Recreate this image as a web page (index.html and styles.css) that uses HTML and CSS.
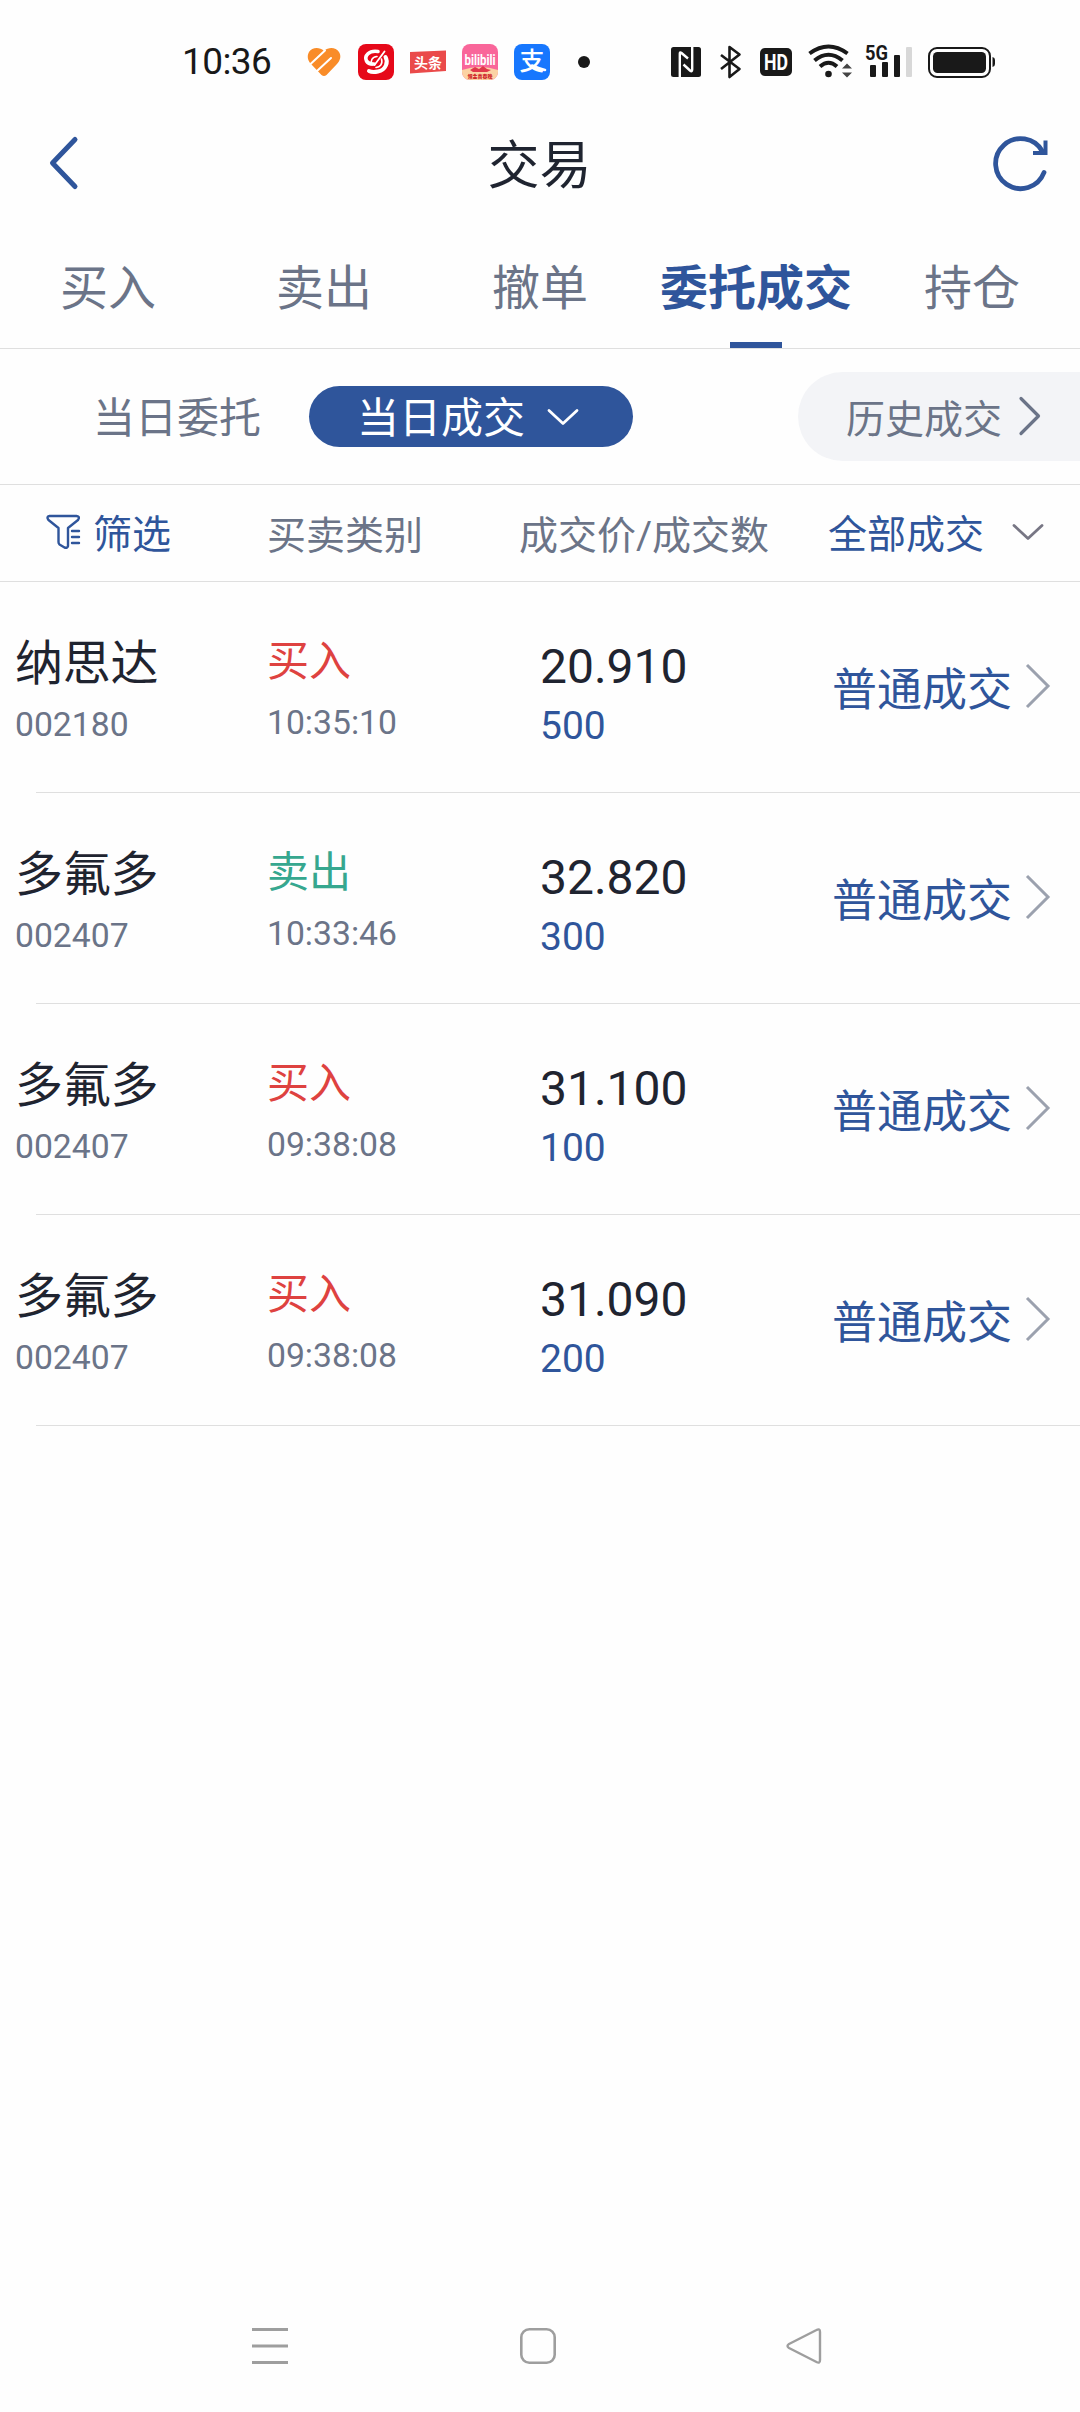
FILE: index.html
```html
<!DOCTYPE html>
<html lang="zh-CN">
<head>
  <meta charset="UTF-8">
  <meta name="viewport" content="width=device-width, initial-scale=1.0">
  <title>交易</title>
  <link rel="stylesheet" href="styles.css">
</head>
<body>
  <div class="status-bar">
    <span class="clock">10:36</span>
    <div class="app-icons">
      <svg width="36" height="36" viewBox="0 0 36 36">
        <path d="M18 7 C13 2.500 6 3.500 3 8 C0.500 12.500 2 17 5.500 20.500 L15.500 31 Q18 33 20.500 31 L30.500 20.500 C34.500 16.500 35.500 12 33 8 C30 3.500 23 2.500 18 7 Z" fill="#f98c28"/>
        <path d="M4 20.500 L19 6.500 M11 27 L25 14" fill="none" stroke="#fff" stroke-width="2" stroke-linecap="round"/>
      </svg>
      <svg width="36" height="36" viewBox="0 0 36 36">
        <rect width="36" height="36" rx="8" fill="#e60819"/>
        <g fill="none" stroke="#fff" stroke-linecap="round">
          <path d="M20 7.500 C11 6 6 12 8.500 17 C10.500 20.500 14 20 16 20" stroke-width="3.600"/>
          <path d="M27.500 13 C30.500 18 28 26 20 27.500 C15 28.500 13 28 11 27" stroke-width="4"/>
          <path d="M26.500 7.500 L16.500 21" stroke-width="1.800"/>
          <path d="M19 12.500 C14 13 12 17 14 21 M23.500 15 C25 20 22 23 18 23.500" stroke-width="1.600"/>
        </g>
      </svg>
      <svg width="36" height="36" viewBox="0 0 36 36">
        <path d="M0 8 L36 6.500 V27 L0 29.500 Z" fill="#ea4a4a"/>
        <text class="toutiao" x="18" y="23.500" text-anchor="middle">头条</text>
      </svg>
      <svg width="36" height="36" viewBox="0 0 36 36">
        <defs>
          <clipPath id="biliClip"><rect width="36" height="36" rx="8"/></clipPath>
        </defs>
        <g clip-path="url(#biliClip)">
          <rect width="36" height="36" fill="#f9669a"/>
          <path d="M0 26 Q18 20 36 26 V36 H0 Z" fill="#fbd3a4"/>
          <path d="M8 26 l5 -3 4 2 4 -3 4 3 4 1 -4 2 H11 Z" fill="#e0384a"/>
        </g>
        <text class="bili" x="18" y="20.500" text-anchor="middle" textLength="31" lengthAdjust="spacingAndGlyphs">bilibili</text>
        <text class="bili-sub" x="18" y="33.500" text-anchor="middle">领金喜春晚</text>
      </svg>
      <svg width="36" height="36" viewBox="0 0 36 36">
        <rect width="36" height="36" rx="8" fill="#1777fe"/>
        <text class="alipay" x="18" y="26" text-anchor="middle">支</text>
        <path d="M18 21.500 Q25 24.500 31 26" fill="none" stroke="#fff" stroke-width="2.600" stroke-linecap="round"/>
      </svg>
      <svg width="36" height="36" viewBox="0 0 36 36">
        <circle cx="18" cy="18" r="6" fill="#191919"/>
      </svg>
    </div>
    <div class="system-icons">
      <svg class="nfc" width="30" height="36" viewBox="0 0 30 36">
        <rect y="3" width="30" height="30" rx="2.500" fill="#191919"/>
        <path d="M8.800 33 V9.500 Q8.800 7.500 10.500 9 L17 14.500 M21.200 3 V25.500 Q21.200 28.500 19 26.500 L12.500 20.500" fill="none" stroke="#fff" stroke-width="2.400"/>
      </svg>
      <svg class="bt" width="21" height="36" viewBox="0 0 21 36" fill="none" stroke="#191919" stroke-width="2.600" stroke-linejoin="round">
        <path d="M1 11 L19.500 25 L9.500 33 V3 L19.500 10.500 L1 25"/>
      </svg>
      <svg class="hd" width="32" height="36" viewBox="0 0 32 36">
        <rect y="4" width="32" height="28" rx="5" fill="#191919"/>
        <text class="hd-text" x="16" y="25.500" text-anchor="middle" textLength="24" lengthAdjust="spacingAndGlyphs">HD</text>
      </svg>
      <svg class="wifi" width="45" height="36" viewBox="0 0 45 36">
        <g fill="none" stroke="#191919" stroke-width="4">
          <path d="M1.500 9.500 Q20.500 -4.500 39.500 9.500"/>
          <path d="M6.500 16.500 Q20.500 5 34.500 16.500"/>
          <path d="M12 22.500 Q20.500 15 29 22.500"/>
        </g>
        <circle cx="20.500" cy="30" r="3.300" fill="#191919"/>
        <path d="M34 24.500 L39 19.500 L44 24.500 Z M34 28.500 L39 33.500 L44 28.500 Z" fill="#444"/>
      </svg>
      <svg class="signal" width="46" height="36" viewBox="0 0 46 36">
        <g fill="#191919">
          <rect x="4" y="21" width="6" height="12" rx="1"/>
          <rect x="16" y="18" width="6" height="15" rx="1"/>
          <rect x="28" y="11" width="6" height="22" rx="1"/>
        </g>
        <rect x="40" y="3" width="6" height="30" rx="1" fill="#d8d8d8"/>
        <text class="net" x="-1" y="15.500" textLength="23" lengthAdjust="spacingAndGlyphs">5G</text>
      </svg>
      <svg class="battery" width="68" height="36" viewBox="0 0 68 36">
        <rect x="1" y="4" width="61" height="29" rx="8" fill="none" stroke="#191919" stroke-width="2"/>
        <rect x="5" y="8" width="53" height="21" rx="4.500" fill="#191919"/>
        <path d="M64.500 13 q2.500 .5 2.500 3 v4 q0 2.500 -2.500 3 Z" fill="#191919"/>
      </svg>
    </div>
  </div>

  <div class="header">
    <svg class="back" width="30" height="54" viewBox="0 0 30 54">
      <path d="M26 3.500 L3.500 27 L26 50.500" fill="none" stroke="#2f559b" stroke-width="5" stroke-linecap="round" stroke-linejoin="round"/>
    </svg>
    <h1>交易</h1>
    <svg class="refresh" width="58" height="58" viewBox="0 0 58 58" fill="none" stroke="#2f559b" stroke-width="4.800">
      <path d="M52 38.500 A25 25 0 1 1 50.500 17.500" stroke-linecap="round"/>
      <path d="M53.500 6.500 V19 H41" stroke-width="4"/>
    </svg>
  </div>

  <div class="tabs">
    <div class="tab">买入</div>
    <div class="tab">卖出</div>
    <div class="tab">撤单</div>
    <div class="tab active">委托成交</div>
    <div class="tab">持仓</div>
  </div>

  <div class="sub-tabs">
    <span class="sub-tab">当日委托</span>
    <span class="pill"><span>当日成交</span>
      <svg width="34" height="20" viewBox="0 0 34 20"><path d="M3 3.500 L17 16.500 L31 3.500" fill="none" stroke="#fff" stroke-width="2.800" stroke-linecap="round" stroke-linejoin="round"/></svg>
    </span>
    <span class="history"><span>历史成交</span>
      <svg width="24" height="42" viewBox="0 0 24 42"><path d="M3 3.500 L20.500 21 L3 38.500" fill="none" stroke="#6b7488" stroke-width="3.200" stroke-linecap="round" stroke-linejoin="round"/></svg>
    </span>
  </div>

  <div class="list-head">
    <span class="filter">
      <svg width="36" height="36" viewBox="0 0 36 36" fill="none" stroke="#2f559b" stroke-width="2.400" stroke-linecap="round" stroke-linejoin="round">
        <path d="M3.500 2 H30.500 Q34.500 2.500 32 6 L22 14 V32 Q21.500 34.500 18.500 33.500 L13.500 30.500 Q12.500 29.500 12.500 28 V14 L2.500 6 Q0 2.500 3.500 2 Z"/>
        <path d="M26 17 H33 M26 23 H33 M26 29 H33"/>
      </svg><span>筛选</span></span>
    <span>买卖类别</span>
    <span>成交价/成交数</span>
    <span class="all"><span>全部成交</span>
      <svg width="34" height="20" viewBox="0 0 34 20"><path d="M3 3.500 L17 16.500 L31 3.500" fill="none" stroke="#777684" stroke-width="2.800" stroke-linecap="round" stroke-linejoin="round"/></svg>
    </span>
  </div>

  <div class="list">
    <div class="row">
      <div><div class="name">纳思达</div><div class="code">002180</div></div>
      <div><div class="side buy">买入</div><div class="time">10:35:10</div></div>
      <div><div class="price">20.910</div><div class="amount">500</div></div>
      <div class="type">普通成交
        <svg width="26" height="46" viewBox="0 0 26 46"><path d="M2 2 L23 23 L2 44" fill="none" stroke="#9ba1ae" stroke-width="3"/></svg>
      </div>
    </div>
    <div class="row">
      <div><div class="name">多氟多</div><div class="code">002407</div></div>
      <div><div class="side sell">卖出</div><div class="time">10:33:46</div></div>
      <div><div class="price">32.820</div><div class="amount">300</div></div>
      <div class="type">普通成交
        <svg width="26" height="46" viewBox="0 0 26 46"><path d="M2 2 L23 23 L2 44" fill="none" stroke="#9ba1ae" stroke-width="3"/></svg>
      </div>
    </div>
    <div class="row">
      <div><div class="name">多氟多</div><div class="code">002407</div></div>
      <div><div class="side buy">买入</div><div class="time">09:38:08</div></div>
      <div><div class="price">31.100</div><div class="amount">100</div></div>
      <div class="type">普通成交
        <svg width="26" height="46" viewBox="0 0 26 46"><path d="M2 2 L23 23 L2 44" fill="none" stroke="#9ba1ae" stroke-width="3"/></svg>
      </div>
    </div>
    <div class="row">
      <div><div class="name">多氟多</div><div class="code">002407</div></div>
      <div><div class="side buy">买入</div><div class="time">09:38:08</div></div>
      <div><div class="price">31.090</div><div class="amount">200</div></div>
      <div class="type">普通成交
        <svg width="26" height="46" viewBox="0 0 26 46"><path d="M2 2 L23 23 L2 44" fill="none" stroke="#9ba1ae" stroke-width="3"/></svg>
      </div>
    </div>
  </div>

  <div class="nav-bar">
    <svg width="40" height="40" viewBox="0 0 40 40"><path d="M2 3.500 H38 M2 20 H38 M2 36.500 H38" stroke="#9e9e9e" stroke-width="3"/></svg>
    <svg width="40" height="40" viewBox="0 0 40 40"><rect x="4.300" y="3.300" width="33.400" height="33.400" rx="8" fill="none" stroke="#9e9e9e" stroke-width="2.600"/></svg>
    <svg width="40" height="40" viewBox="0 0 40 40"><path d="M32.500 4 Q36 2 36 6 V34 Q36 38 32.500 36 L5 22 Q2 20 5 18 Z" fill="none" stroke="#9e9e9e" stroke-width="2.400" stroke-linejoin="round"/></svg>
  </div>
</body>
</html>
```

FILE: styles.css
```css
* { box-sizing: border-box; }
body { margin: 0; height: 2412px; display: flex; flex-direction: column; background: #fefefe; color: #1f2430; font-family: Roboto, "Noto Sans CJK SC", sans-serif; overflow: hidden; }
svg { display: block; flex: none; overflow: visible; }

.status-bar { display: flex; align-items: center; height: 104px; padding: 20px 0 0 182px; color: #191919; }
.clock { width: 124px; font-size: 37px; line-height: 44px; letter-spacing: -0.6px; white-space: nowrap; }
.app-icons { display: flex; gap: 16px; }
.system-icons { display: flex; margin-left: 69px; }
.bt { margin-left: 19px; }
.hd { margin-left: 19px; }
.wifi { margin-left: 16px; }
.signal { margin-left: 13px; }
.battery { margin-left: 16px; }
.toutiao { font-size: 14px; font-weight: 700; fill: #fff; }
.bili { font-size: 14px; font-weight: 700; fill: #fff; }
.bili-sub { font-size: 5px; font-weight: 900; fill: #d0282c; }
.alipay { font-size: 25px; font-weight: 500; fill: #fff; }
.hd-text { font-size: 22px; font-weight: 700; fill: #fff; }
.net { font-size: 21px; font-weight: 700; fill: #191919; }

.header { display: flex; align-items: center; justify-content: space-between; height: 118px; padding: 0 30px 0 49px; }
.header h1 { margin: 8px 0 0 8px; font-size: 52px; line-height: 60px; font-weight: 400; }
.header .back { margin-top: -1px; }
.header .refresh { margin-top: -1px; }

.tabs { display: flex; height: 127px; border-bottom: 1px solid #dfdfdf; color: #6b7488; font-size: 48px; line-height: 134px; text-align: center; }
.tab { flex: 1; width: 216px; white-space: nowrap; }
.tab.active { display: flex; flex-direction: column; align-items: center; justify-content: space-between; color: #2f559b; font-weight: 700; line-height: 134px; }
.tab.active::after { content: ""; width: 52px; height: 6px; margin-top: -14px; background: #2f559b; }

.sub-tabs { display: flex; align-items: center; height: 136px; padding-left: 93px; border-bottom: 1px solid #dfdfdf; color: #6b7488; font-size: 42px; }
.sub-tab { width: 216px; padding-bottom: 4px; }
.pill { display: flex; align-items: center; width: 324px; height: 61px; padding-left: 48px; border-radius: 31px; background: #2f559b; color: #fff; }
.pill span { padding-bottom: 4px; }
.pill svg { margin-left: 21px; }
.history { display: flex; align-items: center; width: 282px; height: 89px; margin-left: auto; padding-left: 48px; border-radius: 45px 0 0 45px; background: #f3f4f7; font-size: 39px; }
.history span { padding-bottom: 2px; }
.history svg { margin: -2px 0 0 16px; }

.list-head { display: grid; grid-template-columns: 221px 252px 309px 1fr; align-items: center; height: 97px; padding-left: 46px; border-bottom: 1px solid #dfdfdf; color: #6b7488; font-size: 39px; }
.list-head span { padding-bottom: 2px; }
.filter { display: flex; align-items: center; gap: 11px; color: #2f559b; }
.all { display: flex; align-items: center; gap: 27px; color: #2f559b; }

.row { display: grid; grid-template-columns: 252px 273px 292px 1fr; position: relative; height: 211px; padding-left: 15px; }
.row::after { content: ""; position: absolute; left: 36px; right: 0; bottom: 0; height: 1px; background: #dfdfdf; }
.name { margin-top: 52px; font-size: 48px; line-height: 60px; letter-spacing: -0.3px; }
.code, .time { color: #6b7488; font-size: 33.7px; line-height: 40px; }
.code { margin-top: 11px; }
.side { margin-top: 52px; font-size: 42px; line-height: 56px; }
.time { margin-top: 13px; }
.buy { color: #de4240; }
.sell { color: #36a78f; }
.price { margin-top: 57px; font-size: 48px; line-height: 56px; }
.amount { margin-top: 9px; color: #2f559b; font-size: 39px; line-height: 44px; }
.type { display: flex; align-items: center; gap: 13px; padding-bottom: 3px; color: #2f559b; font-size: 45px; }

.nav-bar { display: flex; justify-content: space-between; margin-top: auto; padding: 0 256px 46px 250px; }
```
